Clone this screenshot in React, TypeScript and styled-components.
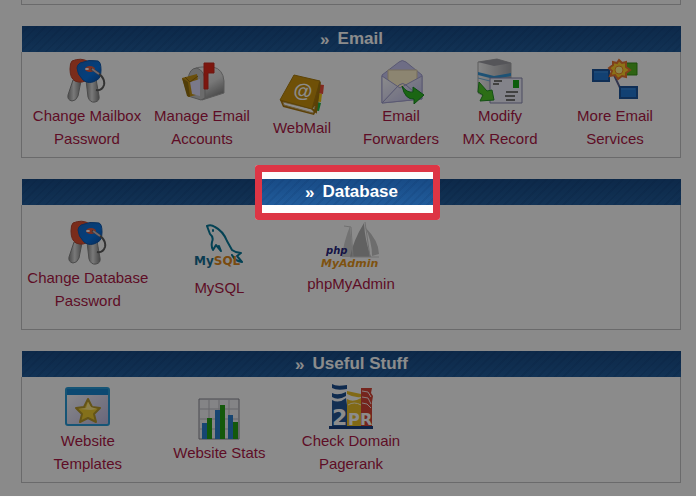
import React from "react";
import styled, { createGlobalStyle } from "styled-components";

const GlobalStyle = createGlobalStyle`
  * { box-sizing: border-box; }
  body {
    margin: 0;
    background: #fcfcfc;
    font-family: "Liberation Sans", Arial, sans-serif;
    overflow-x: hidden;
  }
`;

const Page = styled.main`
  display: flex;
  flex-direction: column;
  gap: 21px;
  padding: 0 15px 13px 21px;
`;

const PreviousPanel = styled.div`
  height: 5px;
  border: 1px solid #c2c2c4;
  border-top: 0;
`;

const Panel = styled.section`
  display: flex;
  flex-direction: column;
`;

const PanelHeader = styled.header`
  position: relative;
  display: flex;
  align-items: center;
  justify-content: center;
  gap: 8px;
  height: 26px;
  margin-left: 1px;
  color: #fff;
  background:
    repeating-linear-gradient(135deg, transparent 0 4px, rgba(8, 42, 92, 0.12) 4px 6px),
    linear-gradient(#184b86, #215c9b);
`;

const Chevron = styled.span`
  padding-top: 2px;
  font-size: 17px;
  font-weight: 700;
  line-height: 26px;
`;

const Title = styled.h2`
  margin: 0;
  font-size: 17px;
  font-weight: 700;
  line-height: 26px;
`;

const PanelBody = styled.div<{ $columns: string; $space: string }>`
  display: grid;
  grid-template-columns: ${(p) => p.$columns};
  align-items: center;
  padding: ${(p) => p.$space};
  border: 1px solid #c2c2c4;
  border-top: 0;
  background: #fefefe;
`;

const Tile = styled.a<{ $below: number }>`
  display: flex;
  flex-direction: column;
  align-items: center;
  padding-bottom: ${(p) => p.$below}px;
  color: #ac1846;
  font-size: 15px;
  line-height: 23px;
  text-align: center;
  text-decoration: none;
  white-space: pre-line;
`;

const Spotlight = styled.div`
  position: absolute;
  z-index: 1;
  top: -14px;
  left: 50%;
  width: 185px;
  height: 55px;
  margin-left: -97px;
  border: 7px solid #dd3545;
  border-radius: 3px;
  box-shadow: 0 0 0 2000px rgba(0, 0, 0, 0.45);
  pointer-events: none;
`;

const Icon = styled.svg`
  display: block;
  flex: none;
`;

const KeysIcon = () => (
  <Icon width="48" height="46" viewBox="0 0 48 46">
    <defs>
      <linearGradient id="steel" x1="0" x2="1">
        <stop offset="0" stopColor="#8b8b8b" />
        <stop offset=".45" stopColor="#dddddd" />
        <stop offset="1" stopColor="#808080" />
      </linearGradient>
      <linearGradient id="keyBlue" x1="0" y1="0" x2="1" y2="1">
        <stop offset="0" stopColor="#1768c5" />
        <stop offset=".6" stopColor="#0874e3" />
        <stop offset="1" stopColor="#0d4fa5" />
      </linearGradient>
    </defs>
    <path d="M10 22 5 37q-1 5 4 6 4 0 6-5l3-15z" fill="url(#steel)" stroke="#888" />
    <path d="m23 22 2 17q2 6 7 5 5-1 4-6l-3-17z" fill="url(#steel)" stroke="#888" />
    <path d="M9 3q9-4 17 1v17q-7 5-14 2-5-3-5-12 0-6 2-8Z" fill="#df5132" stroke="#b8442e" />
    <path d="M17 5q9-4 18-2 3 1 3 9 0 8-4 10-8 5-14 0-6-6-6-12 0-3 3-5Z" fill="url(#keyBlue)" stroke="#1258ab" />
    <ellipse cx="27" cy="11" rx="5" ry="3" fill="#e1593f" />
    <ellipse cx="24" cy="11" rx="2" ry="1" fill="#fff" />
    <path d="M28 11q15 7 13 16-2 6-8 5" fill="none" stroke="#5e5e5e" strokeWidth="2" />
    <path d="m29 11 7 5" stroke="#ccb7bd" strokeWidth="2" />
  </Icon>
);

const MailboxIcon = () => (
  <Icon width="48" height="46" viewBox="0 0 48 46">
    <defs>
      <linearGradient id="boxMetal" x1="0" y1="0" x2=".5" y2="1">
        <stop offset="0" stopColor="#f8f8f8" />
        <stop offset=".6" stopColor="#dadada" />
        <stop offset="1" stopColor="#8c8c8c" />
      </linearGradient>
    </defs>
    <path d="M16 11q3-2 8-2h11q10 2 11 14v12L24 42Z" fill="url(#boxMetal)" stroke="#a5a5a5" />
    <path d="M10 22q1-12 9-12 8 3 8 14v16l-4 2-13-4Z" fill="#c4c4c4" stroke="#999" />
    <path d="m4 20 15-4 3 20-12 3Z" fill="#c39214" />
    <path d="m4 20 5 18 3 1-2-15Z" fill="#94700f" />
    <path d="m12 24 10-3v17l-8-2Z" fill="#dedcfb" />
    <path d="m7 19 5 5 8-6" fill="none" stroke="#93690f" />
    <path d="M26 5h10v10h-6v16h-4Z" fill="#e3291a" stroke="#c92b1e" />
  </Icon>
);

const AddressBookIcon = () => (
  <Icon width="48" height="46" viewBox="0 0 48 46">
    <path d="m38 14 8 1-1 9-8-1Z" fill="#ed4d3b" />
    <path d="m37 23 7 1-1 8-8-1Z" fill="#f3c711" />
    <path d="m35 31 8 2-2 8-8-1Z" fill="#24b144" />
    <path d="m2 30 3 7 31 8 3-6 3-26-4-3Z" fill="#a9760d" />
    <path d="m5 32 29 7 3-3-2 7-29-8Z" fill="#fff" stroke="#c6aa6a" />
    <path d="m16 5 26 6-8 28L2 30Z" fill="#ca930e" stroke="#a97a0c" />
    <path d="m34 39 4 3 4-30" fill="none" stroke="#a4760c" strokeWidth="2" />
    <text x="25" y="27" textAnchor="middle" fill="#fff" fontFamily="Liberation Sans, sans-serif" fontSize="19" fontWeight="700" transform="rotate(8 24 22)">@</text>
  </Icon>
);

const ForwardIcon = () => (
  <Icon width="48" height="46" viewBox="0 0 48 46">
    <defs>
      <linearGradient id="mailPaper" x1="0" y1="0" x2="1" y2="1">
        <stop offset="0" stopColor="#fff" />
        <stop offset="1" stopColor="#bbb9e9" />
      </linearGradient>
    </defs>
    <path d="M5 17 22 4q3-3 7 0l16 13v24L5 45Z" fill="#c8c6f3" stroke="#a4a2d0" />
    <path d="M11 12h29v17L11 31Z" fill="#fff2ce" stroke="#d7c7a5" />
    <path d="m5 18 18 12 22-12v23L5 45Z" fill="url(#mailPaper)" stroke="#a4a2d0" />
    <path d="m5 45 17-18q4-3 7 0l16 14" fill="none" stroke="#9a99c9" />
    <path d="M25 28q5 7 11 6v-5l11 8-10 9v-5q-9 1-12-13Z" fill="#32bb25" stroke="#168b22" />
  </Icon>
);

const ServerMailIcon = () => (
  <Icon width="48" height="46" viewBox="0 0 48 46">
    <defs>
      <linearGradient id="serverFace">
        <stop offset="0" stopColor="#f5f5f5" />
        <stop offset="1" stopColor="#a5a5aa" />
      </linearGradient>
    </defs>
    <path d="m2 4 19-3 14 4v33L17 43 2 35Z" fill="url(#serverFace)" stroke="#aaa" />
    <path d="m2 4 16 4 17-3L21 1Z" fill="#9b9ba3" />
    <path d="m2 14 16 4 17-3v3l-17 3-16-4Z" fill="#3595d5" />
    <path d="m2 20 16 4 17-3" fill="none" stroke="#71b2dc" />
    <path d="M14 20h32v25H14Z" fill="#efeffb" stroke="#8988af" />
    <path d="M18 23h8m-9 3h6M30 34h12m-13 4h10m-9 4h9" stroke="#777" strokeWidth="2" />
    <path d="M37 22h6v8h-6Z" fill="#17a917" />
    <path d="m3 24 8 9 5-1 2 10-14 1 3-6-5-3Z" fill="#51c929" stroke="#239324" />
  </Icon>
);

const ServicesIcon = () => (
  <Icon width="48" height="46" viewBox="0 0 48 46">
    <path d="M18 17h5l8 17" fill="none" stroke="#5c6391" strokeWidth="2" />
    <path d="M34 5h12v12H34Z" fill="#55b521" stroke="#328b14" />
    <path d="M2 12h16v11H2Zm27 17h17v11H29Z" fill="#2177d2" stroke="#1c559c" strokeWidth="2" />
    <path d="M3 14h14M30 31h14" stroke="#418fdc" />
    <path d="m28 2 3 3 4-1v5l4 3-4 3v4l-4-1-4 3-3-4-5 1 2-5-3-3 4-3V4l4 1Z" fill="#ffd02b" stroke="#e87532" strokeWidth="2" />
    <circle cx="28" cy="12" r="4" fill="#fff28c" stroke="#ee8926" />
  </Icon>
);

const MySqlIcon = () => (
  <Icon width="52" height="54" viewBox="0 0 52 54">
    <path d="M14 4q4-2 8 1 8 4 12 14l5 9q4 3 9 3l-4 3 5 6q-7-1-10-7M14 4l3 8q4 3 2 8-1 5 1 8l3-5 5 6-2-5M20 8v1" fill="none" stroke="#087899" strokeWidth="2" strokeLinecap="round" strokeLinejoin="round" />
    <text x="1" y="43" fontFamily="DejaVu Sans, sans-serif" fontSize="12" fontWeight="700"><tspan fill="#176d94">My</tspan><tspan fill="#dc881d">SQL</tspan></text>
  </Icon>
);

const PhpMyAdminIcon = () => (
  <Icon width="68" height="50" viewBox="0 0 68 50">
    <path d="M33 4q-7 18-8 31h11Z" fill="#d0d0d0" />
    <path d="M47 1q-11 18-14 34h21Q48 19 47 1Z" fill="#b1b1b1" />
    <path d="M48 5q14 14 14 27l-7 2Q55 19 48 5Z" fill="#c7c7c7" />
    <path d="m27 4 7 1 2 30M48 0l5 35M33 35h29" fill="none" stroke="#ccc" />
    <text x="9" y="32" fontFamily="DejaVu Sans, sans-serif" fontSize="10" fontWeight="700" fontStyle="italic" fill="#29267d">php</text>
    <text x="4" y="45" fontFamily="DejaVu Sans, sans-serif" fontSize="11" fontWeight="700" fontStyle="italic" fill="#e6951b">MyAdmin</text>
  </Icon>
);

const TemplateIcon = () => (
  <Icon width="48" height="46" viewBox="0 0 48 46">
    <defs>
      <linearGradient id="windowFill" x1="0" y1="0" x2="1" y2="1">
        <stop offset="0" stopColor="#fff" />
        <stop offset="1" stopColor="#bdb9df" />
      </linearGradient>
    </defs>
    <rect x="2" y="5" width="43" height="37" rx="2" fill="url(#windowFill)" stroke="#299bd8" strokeWidth="2" />
    <path d="M3 6h41v6H3Z" fill="#1686d0" />
    <path d="m24 16 4 8 8 1-6 6 2 8-8-4-8 4 2-8-6-6 8-1Z" fill="#f0cc30" stroke="#b79a2c" strokeWidth="2" strokeLinejoin="round" />
    <path d="m15 26 7-1 2-6 3 5 6 2-6 1Z" fill="#ffe98a" />
  </Icon>
);

const StatsIcon = () => (
  <Icon width="48" height="46" viewBox="0 0 48 46">
    <path d="M4 4h40v40H4Z" fill="#f1f1f4" stroke="#85858f" />
    <path d="M14 4v40M24 4v40M34 4v40M4 14h40M4 24h40M4 34h40" stroke="#bbbbc2" />
    <path d="M7 28h5v16H7Zm13-13h5v29h-5Zm13 5h5v24h-5Z" fill="#2b80cf" />
    <path d="M12 23h5v21h-5Zm13-13h5v34h-5Zm13 17h5v17h-5Z" fill="#26a315" />
  </Icon>
);

const PagerankIcon = () => (
  <Icon width="48" height="46" viewBox="0 0 48 46">
    <path d="M5 1q4 3 15 1v4Q10 8 5 5Zm0 9q6 3 14-1v4q-8 5-14 1Z" fill="#1d4f91" />
    <path d="M5 17q7 4 14-2l1 7 1 22H5Z" fill="#245796" />
    <path d="m20 8 14 3v3q-7 1-14-3Zm0 8q6 4 14-1v29H20Z" fill="#ecc027" />
    <path d="M21 22q6-4 13 0" fill="none" stroke="#fff8d8" />
    <path d="M34 5h11l-1 5 2 3-1 6v25H34Z" fill="#d54435" />
    <path d="m35 8 6 1 3 5M35 14l6 1 3 6M35 20l5 1 4 4" fill="none" stroke="#f9e7e3" />
    <text x="5" y="42" fill="#fff" fontFamily="DejaVu Sans, sans-serif" fontSize="22" fontWeight="700">2</text>
    <text x="21" y="42" fill="#fff" fontFamily="DejaVu Sans, sans-serif" fontSize="16" fontWeight="700">P</text>
    <text x="33" y="42" fill="#fff" fontFamily="DejaVu Sans, sans-serif" fontSize="16" fontWeight="700">R</text>
    <path d="M2 43h44v3H2Z" fill="#163f80" />
  </Icon>
);

type Item = { label: string; icon: React.ReactNode; below?: number };
type Group = { title: string; columns: string; space: string; spotlight?: boolean; items: Item[] };

const groups: Group[] = [
  {
    title: "Email",
    columns: "130fr 100fr 100fr 98fr 100fr 130fr",
    space: "6px 0 7px",
    items: [
      { label: "Change Mailbox\nPassword", icon: <KeysIcon /> },
      { label: "Manage Email\nAccounts", icon: <MailboxIcon /> },
      { label: "WebMail", icon: <AddressBookIcon /> },
      { label: "Email\nForwarders", icon: <ForwardIcon /> },
      { label: "Modify\nMX Record", icon: <ServerMailIcon /> },
      { label: "More Email\nServices", icon: <ServicesIcon /> },
    ],
  },
  {
    title: "Database",
    columns: "repeat(5, 1fr)",
    space: "15px 0 17px",
    spotlight: true,
    items: [
      { label: "Change Database\nPassword", icon: <KeysIcon /> },
      { label: "MySQL", icon: <MySqlIcon />, below: 12 },
      { label: "phpMyAdmin", icon: <PhpMyAdminIcon />, below: 16 },
    ],
  },
  {
    title: "Useful Stuff",
    columns: "repeat(5, 1fr)",
    space: "6px 0 7px",
    items: [
      { label: "Website\nTemplates", icon: <TemplateIcon /> },
      { label: "Website Stats", icon: <StatsIcon /> },
      { label: "Check Domain\nPagerank", icon: <PagerankIcon /> },
    ],
  },
];

export default function App() {
  return (
    <>
      <GlobalStyle />
      <Page>
        <PreviousPanel />
        {groups.map((group) => (
          <Panel key={group.title}>
            <PanelHeader>
              <Chevron aria-hidden="true">»</Chevron>
              <Title>{group.title}</Title>
              {group.spotlight && <Spotlight />}
            </PanelHeader>
            <PanelBody $columns={group.columns} $space={group.space}>
              {group.items.map((item) => (
                <Tile key={item.label} href="#" $below={item.below ?? 0}>
                  {item.icon}
                  {item.label}
                </Tile>
              ))}
            </PanelBody>
          </Panel>
        ))}
      </Page>
    </>
  );
}
